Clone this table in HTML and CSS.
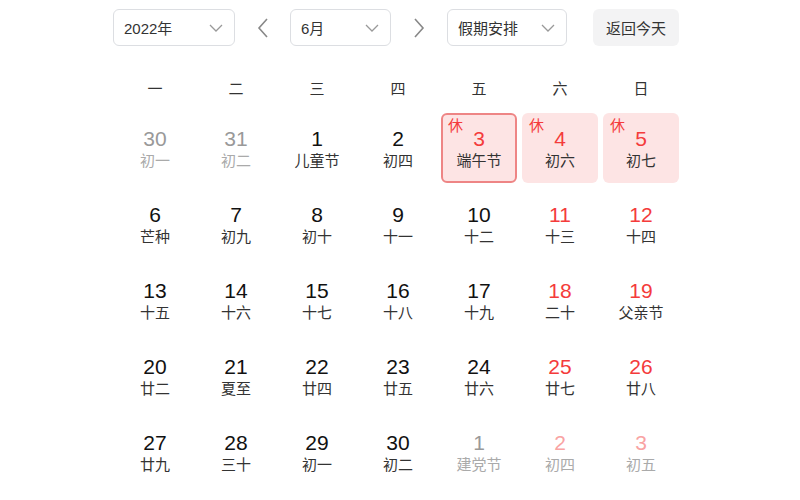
FILE: index.html
```html
<!doctype html>
<html lang="zh-CN">
  <head>
    <meta charset="UTF-8" />
    <title>日历</title>
    <link rel="stylesheet" href="styles.css">
  </head>
  <body>
    <div class="toolbar">
      <div class="select select-year">
        <span>2022年</span>
        <svg class="caret" width="14" height="8" viewBox="0 0 14 8"><path d="M1 1l6 6 6-6" /></svg>
      </div>
      <button type="button" class="nav">
        <svg width="12" height="20" viewBox="0 0 12 20"><path d="M10 1L2 10l8 9" /></svg>
      </button>
      <div class="select select-month">
        <span>6月</span>
        <svg class="caret" width="14" height="8" viewBox="0 0 14 8"><path d="M1 1l6 6 6-6" /></svg>
      </div>
      <button type="button" class="nav nav-next">
        <svg width="12" height="20" viewBox="0 0 12 20"><path d="M2 1l8 9-8 9" /></svg>
      </button>
      <div class="select select-holiday">
        <span>假期安排</span>
        <svg class="caret" width="14" height="8" viewBox="0 0 14 8"><path d="M1 1l6 6 6-6" /></svg>
      </div>
      <button type="button" class="today">返回今天</button>
    </div>

    <div class="calendar">
      <div class="weekdays">
        <div>一</div><div>二</div><div>三</div><div>四</div><div>五</div><div>六</div><div>日</div>
      </div>

      <div class="days">
        <div class="day other"><b>30</b><i>初一</i></div>
        <div class="day other"><b>31</b><i>初二</i></div>
        <div class="day"><b>1</b><i>儿童节</i></div>
        <div class="day"><b>2</b><i>初四</i></div>
        <div class="day rest selected"><em>休</em><b>3</b><i>端午节</i></div>
        <div class="day rest"><em>休</em><b>4</b><i>初六</i></div>
        <div class="day rest"><em>休</em><b>5</b><i>初七</i></div>

        <div class="day"><b>6</b><i>芒种</i></div>
        <div class="day"><b>7</b><i>初九</i></div>
        <div class="day"><b>8</b><i>初十</i></div>
        <div class="day"><b>9</b><i>十一</i></div>
        <div class="day"><b>10</b><i>十二</i></div>
        <div class="day weekend"><b>11</b><i>十三</i></div>
        <div class="day weekend"><b>12</b><i>十四</i></div>

        <div class="day"><b>13</b><i>十五</i></div>
        <div class="day"><b>14</b><i>十六</i></div>
        <div class="day"><b>15</b><i>十七</i></div>
        <div class="day"><b>16</b><i>十八</i></div>
        <div class="day"><b>17</b><i>十九</i></div>
        <div class="day weekend"><b>18</b><i>二十</i></div>
        <div class="day weekend"><b>19</b><i>父亲节</i></div>

        <div class="day"><b>20</b><i>廿二</i></div>
        <div class="day"><b>21</b><i>夏至</i></div>
        <div class="day"><b>22</b><i>廿四</i></div>
        <div class="day"><b>23</b><i>廿五</i></div>
        <div class="day"><b>24</b><i>廿六</i></div>
        <div class="day weekend"><b>25</b><i>廿七</i></div>
        <div class="day weekend"><b>26</b><i>廿八</i></div>

        <div class="day"><b>27</b><i>廿九</i></div>
        <div class="day"><b>28</b><i>三十</i></div>
        <div class="day"><b>29</b><i>初一</i></div>
        <div class="day"><b>30</b><i>初二</i></div>
        <div class="day other"><b>1</b><i>建党节</i></div>
        <div class="day other weekend"><b>2</b><i>初四</i></div>
        <div class="day other weekend"><b>3</b><i>初五</i></div>
      </div>
    </div>
  </body>
</html>
```

FILE: styles.css
```css
body {
  margin: 0;
  background: #fff;
  font-family: "Liberation Sans", "Noto Sans CJK SC", sans-serif;
  color: #333;
}
.toolbar {
  display: flex;
  align-items: center;
  padding: 9px 0 0 113px;
  height: 37px;
}
.select {
  box-sizing: border-box;
  height: 37px;
  display: flex;
  align-items: center;
  justify-content: space-between;
  padding: 0 11px 0 10px;
  border: 1px solid #dcdee2;
  border-radius: 6px;
  font-size: 15px;
  color: #333;
}
.select-year {
  width: 122px;
}
.select-month {
  width: 101px;
}
.select-holiday {
  width: 120px;
}
.caret path {
  fill: none;
  stroke: #999;
  stroke-width: 1.3;
}
.nav {
  width: 55px;
  height: 37px;
  padding: 0;
  border: none;
  background: none;
  display: flex;
  align-items: center;
  justify-content: center;
}
.nav-next {
  width: 56px;
}
.nav path {
  fill: none;
  stroke: #888;
  stroke-width: 1.6;
}
.today {
  margin-left: 26px;
  box-sizing: border-box;
  width: 86px;
  height: 37px;
  border: none;
  border-radius: 6px;
  background: #f3f3f4;
  font-family: inherit;
  font-size: 15px;
  color: #333;
  padding: 0;
}
.calendar {
  width: 562px;
  margin: 28px 0 0 117px;
}
.weekdays {
  display: grid;
  grid-template-columns: repeat(7, 76px);
  column-gap: 5px;
  height: 30px;
  line-height: 30px;
  text-align: center;
  font-size: 15px;
  color: #333;
}
.days {
  margin-top: 9px;
  display: grid;
  grid-template-columns: repeat(7, 76px);
  grid-auto-rows: 70px;
  gap: 6px 5px;
}
.day {
  position: relative;
  box-sizing: border-box;
  padding-top: 14px;
  border-radius: 6px;
  text-align: center;
}
.day b {
  display: block;
  font-weight: normal;
  font-size: 21px;
  line-height: 24px;
  color: #111;
}
.day i {
  display: block;
  font-style: normal;
  font-size: 15px;
  line-height: 20px;
  color: #333;
}
.day em {
  position: absolute;
  top: 4px;
  left: 7px;
  font-style: normal;
  font-size: 15px;
  line-height: 18px;
  color: #f43b3b;
}
.weekend b,
.rest b {
  color: #f43b3b;
}
.rest {
  background: #fde4e4;
}
.selected {
  border: 2px solid #ee8585;
  padding-top: 12px;
}
.selected em {
  top: 2px;
  left: 5px;
}
.other b {
  color: #999;
}
.other i {
  color: #aaa;
}
.other.weekend b {
  color: #f9a3a3;
}
```
